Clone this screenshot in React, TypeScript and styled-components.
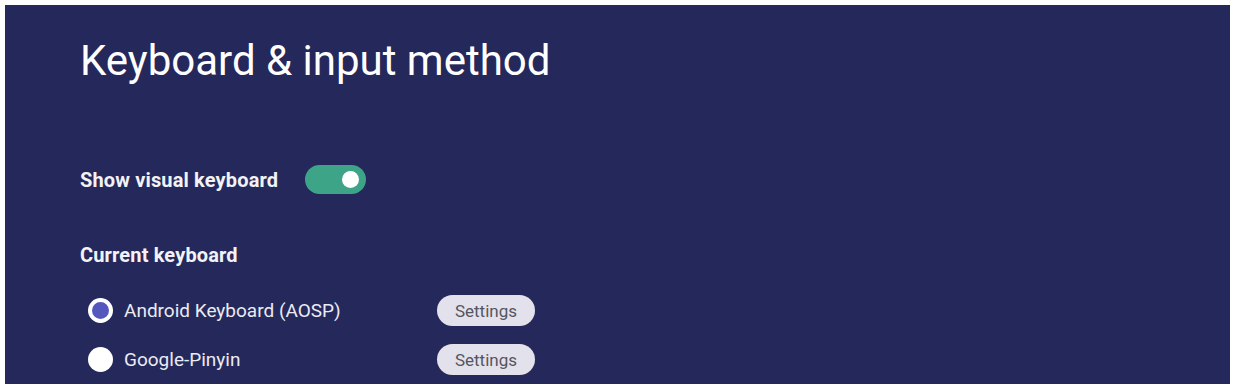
import React, { useState } from 'react';
import styled, { createGlobalStyle } from 'styled-components';

const GlobalStyle = createGlobalStyle`
  html, body {
    margin: 0;
    padding: 0;
    background: #ffffff;
  }
  body {
    font-family: Roboto, 'Liberation Sans', sans-serif;
  }
`;

const Page = styled.div`
  padding: 5px 4px 3px 5px;
  width: 1234px;
  height: 387px;
  box-sizing: border-box;
`;

const Panel = styled.div`
  height: 100%;
  background: #25285a;
  padding: 32px 0 0 75px;
  box-sizing: border-box;
  display: flex;
  flex-direction: column;
  color: #ffffff;
`;

const Title = styled.h1`
  margin: 0;
  font-size: 42px;
  font-weight: 400;
  line-height: 48px;
`;

const ToggleRow = styled.div`
  display: flex;
  align-items: center;
  gap: 27px;
  margin-top: 80px;
`;

const Label = styled.span`
  font-size: 20px;
  font-weight: 700;
  letter-spacing: 0.15px;
  color: #f2f2f7;
`;

const Switch = styled.button<{ on: boolean }>`
  width: 61px;
  height: 29px;
  border: none;
  border-radius: 15px;
  padding: 0 7px;
  background: ${(p) => (p.on ? '#3da487' : '#6b6e8f')};
  display: flex;
  align-items: center;
  justify-content: ${(p) => (p.on ? 'flex-end' : 'flex-start')};
  cursor: pointer;
`;

const Knob = styled.span`
  width: 17px;
  height: 17px;
  border-radius: 50%;
  background: #ffffff;
`;

const Section = styled.div`
  margin-top: 49px;
`;

const Options = styled.div`
  display: flex;
  flex-direction: column;
  gap: 18px;
  margin-top: 28px;
  padding-left: 8px;
`;

const Option = styled.div`
  display: flex;
  align-items: center;
  height: 31px;
`;

const Radio = styled.span<{ checked: boolean }>`
  width: 25px;
  height: 25px;
  border-radius: 50%;
  box-sizing: border-box;
  background: ${(p) => (p.checked ? '#5458bd' : '#ffffff')};
  border: ${(p) => (p.checked ? '4px solid #ffffff' : 'none')};
  flex-shrink: 0;
`;

const OptionName = styled.span`
  font-size: 19px;
  color: #ebebf3;
  margin-left: 11px;
  width: 313px;
`;

const SettingsButton = styled.button`
  width: 98px;
  height: 31px;
  border: none;
  border-radius: 16px;
  background: #e3e2ec;
  color: #55555f;
  font-family: Roboto, 'Liberation Sans', sans-serif;
  font-size: 17px;
  cursor: pointer;
`;

const keyboards = ['Android Keyboard (AOSP)', 'Google-Pinyin'];

export default function App() {
  const [visual, setVisual] = useState(true);
  const [current, setCurrent] = useState(0);
  return (
    <>
      <GlobalStyle />
      <Page>
        <Panel>
          <Title>Keyboard &amp; input method</Title>
          <ToggleRow>
            <Label>Show visual keyboard</Label>
            <Switch on={visual} onClick={() => setVisual(!visual)}>
              <Knob />
            </Switch>
          </ToggleRow>
          <Section>
            <Label>Current keyboard</Label>
            <Options>
              {keyboards.map((k, i) => (
                <Option key={k} onClick={() => setCurrent(i)}>
                  <Radio checked={current === i} />
                  <OptionName>{k}</OptionName>
                  <SettingsButton>Settings</SettingsButton>
                </Option>
              ))}
            </Options>
          </Section>
        </Panel>
      </Page>
    </>
  );
}
